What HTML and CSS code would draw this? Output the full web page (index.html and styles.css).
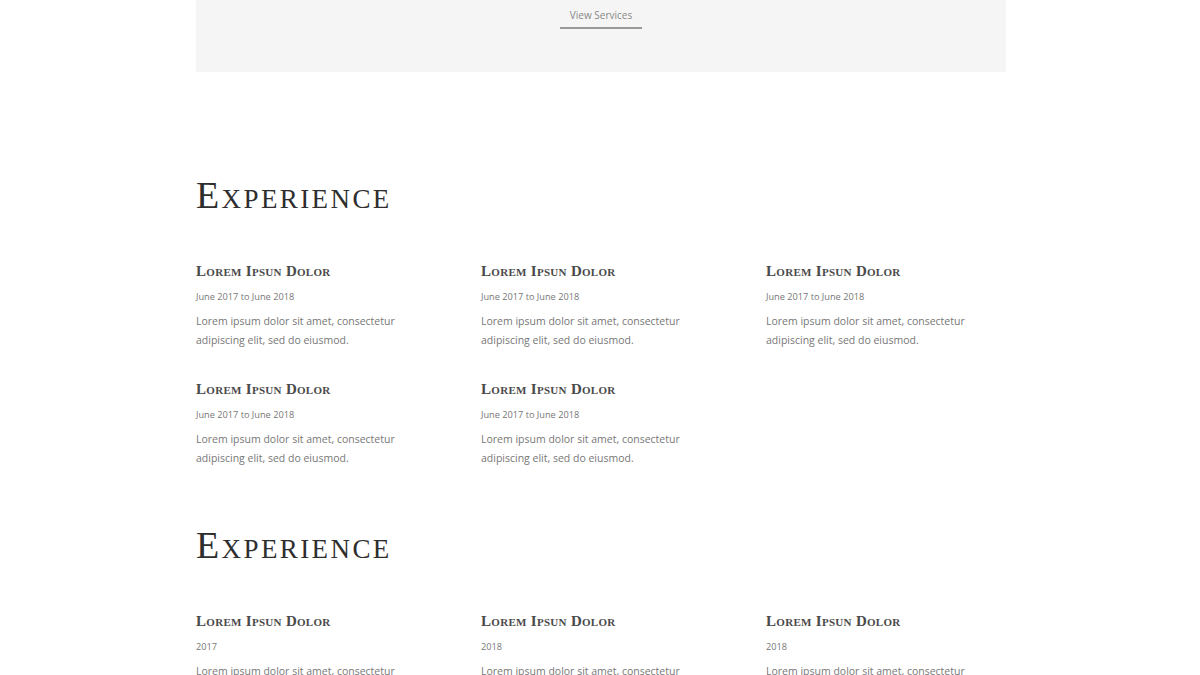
FILE: index.html
```html
<!DOCTYPE html>
<html>
<head>
<meta charset="utf-8">
<link rel="stylesheet" href="styles.css">
</head>
<body>
<div class="page">
  <div class="services">
    <a class="services-link" href="#">View Services</a>
  </div>

  <section class="section first">
    <h2 class="heading">Experience</h2>
    <div class="grid">
      <div class="item">
        <h3 class="title">Lorem Ipsun Dolor</h3>
        <div class="date">June 2017 to June 2018</div>
        <p class="text">Lorem ipsum dolor sit amet, consectetur adipiscing elit, sed do eiusmod.</p>
      </div>
      <div class="item">
        <h3 class="title">Lorem Ipsun Dolor</h3>
        <div class="date">June 2017 to June 2018</div>
        <p class="text">Lorem ipsum dolor sit amet, consectetur adipiscing elit, sed do eiusmod.</p>
      </div>
      <div class="item">
        <h3 class="title">Lorem Ipsun Dolor</h3>
        <div class="date">June 2017 to June 2018</div>
        <p class="text">Lorem ipsum dolor sit amet, consectetur adipiscing elit, sed do eiusmod.</p>
      </div>
      <div class="item">
        <h3 class="title">Lorem Ipsun Dolor</h3>
        <div class="date">June 2017 to June 2018</div>
        <p class="text">Lorem ipsum dolor sit amet, consectetur adipiscing elit, sed do eiusmod.</p>
      </div>
      <div class="item">
        <h3 class="title">Lorem Ipsun Dolor</h3>
        <div class="date">June 2017 to June 2018</div>
        <p class="text">Lorem ipsum dolor sit amet, consectetur adipiscing elit, sed do eiusmod.</p>
      </div>
    </div>
  </section>

  <section class="section second">
    <h2 class="heading">Experience</h2>
    <div class="grid">
      <div class="item">
        <h3 class="title">Lorem Ipsun Dolor</h3>
        <div class="date">2017</div>
        <p class="text">Lorem ipsum dolor sit amet, consectetur adipiscing elit, sed do eiusmod.</p>
      </div>
      <div class="item">
        <h3 class="title">Lorem Ipsun Dolor</h3>
        <div class="date">2018</div>
        <p class="text">Lorem ipsum dolor sit amet, consectetur adipiscing elit, sed do eiusmod.</p>
      </div>
      <div class="item">
        <h3 class="title">Lorem Ipsun Dolor</h3>
        <div class="date">2018</div>
        <p class="text">Lorem ipsum dolor sit amet, consectetur adipiscing elit, sed do eiusmod.</p>
      </div>
    </div>
  </section>
</div>
</body>
</html>
```

FILE: styles.css
```css
* { box-sizing: border-box; }

html, body {
  margin: 0;
  padding: 0;
  background: #ffffff;
}

body {
  padding-left: 2px;
  font-family: "Open Sans", "Liberation Sans", sans-serif;
  color: #777;
}

.page {
  width: 810px;
  margin: 0 auto;
}

.services {
  height: 72px;
  background: #f5f5f5;
  display: flex;
  justify-content: center;
  align-items: flex-start;
  padding-top: 7px;
}

.services-link {
  font-size: 10px;
  line-height: 16px;
  color: #888;
  text-decoration: none;
  padding: 0 10px 4px;
  border-bottom: 2px solid #9a9a9a;
}

.section.first { padding-top: 103px; }
.section.second { padding-top: 57px; }

.heading {
  margin: 0;
  font-family: "Liberation Serif", "DejaVu Serif", serif;
  font-variant: small-caps;
  font-weight: 400;
  font-size: 38px;
  line-height: 40px;
  letter-spacing: 2.4px;
  color: #2e2e2e;
}

.grid {
  margin-top: 46px;
  display: grid;
  grid-template-columns: repeat(3, 240px);
  column-gap: 45px;
  row-gap: 29px;
}

.title {
  margin: 0;
  font-family: "Liberation Serif", "DejaVu Serif", serif;
  font-variant: small-caps;
  font-weight: 700;
  font-size: 15px;
  line-height: 20px;
  letter-spacing: 0.3px;
  color: #4a4a4a;
}

.date {
  margin-top: 8px;
  font-size: 9.2px;
  line-height: 16px;
  color: #777;
}

.text {
  margin: 7px 0 0;
  font-size: 10.5px;
  line-height: 19px;
  color: #777;
}
```
